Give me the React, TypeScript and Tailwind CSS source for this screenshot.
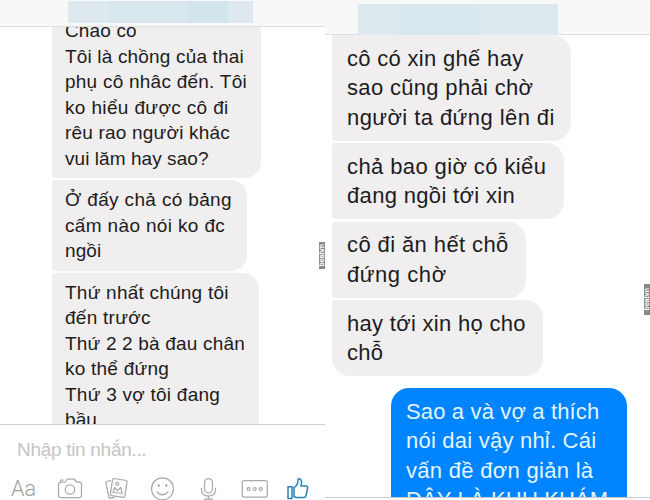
import clsx from 'clsx';

type Line = { text: string; tracking: string };

function Bubble({ lines, className, lineClass }: { lines: Line[]; className: string; lineClass: string }) {
  return (
    <div className={clsx('shrink-0', className)}>
      {lines.map((line) => (
        <div key={line.text} className={clsx('whitespace-nowrap', lineClass, line.tracking)}>
          {line.text}
        </div>
      ))}
    </div>
  );
}

const small = 'h-[25.5px] text-[19px] leading-[25.5px]';
const large = 'h-[29.5px] text-[22px] leading-[29.5px]';
const grey = 'bg-[#f0eeef] text-[#1d1c1d]';

function Watermark() {
  return (
    <div className="flex h-full w-full items-center justify-center border border-[#888] bg-[#8a8a8a]">
      <span className="rotate-180 text-[7px] font-bold leading-[4px] text-white [writing-mode:vertical-rl]">beatvn</span>
    </div>
  );
}

function Toolbar() {
  return (
    <div className="mt-[12px] flex h-[27px] pl-[11px]">
      <span className="w-[46px] pt-[2px] font-[Roboto] text-[21.500px] font-light leading-[25px] text-[#a0a0a0]">Aa</span>
      <svg className="h-[27px] w-[260px]" viewBox="57 474 260 27" fill="none" stroke="#aaa" strokeWidth="1.25" strokeLinecap="round" strokeLinejoin="round">
        <path d="M61 482h4l2.200-3h7l2.300 3h2.500q2.500 0 2.500 2.500v10.500q0 2.500-2.500 2.500H61q-2.500 0-2.500-2.500v-10.500q0-2.500 2.500-2.500z" />
        <circle cx="70" cy="489.500" r="4.700" />
        <path d="M60.500 481v-1h2.500" />
        <path d="M113.800 478.500l12.300 2q1.200.2 1 1.400l-2.300 14.500q-.2 1.200-1.400 1l-12-1.800q-1.200-.2-1-1.400l2.100-14.500q.2-1.200 1.300-1.200z" />
        <path d="M110.500 480.700l-3.800.8q-1 .2-.8 1.200l3 14.500q.2 1.100 1.300.9l4.300-.8M113 492.500l1.500-5 2.800 3 3.400-3 1.500 6z" />
        <circle cx="117.200" cy="483.800" r="1.500" />
        <circle cx="162.500" cy="488.800" r="11" />
        <path d="M157 492q5.500 5.500 11 0" />
        <path d="M158.800 485v1M166.300 485v1" strokeWidth="2" />
        <rect x="204.500" y="478.500" width="8" height="14.500" rx="4" />
        <path d="M201.500 488v1.500q0 6.500 7 6.500t7-6.500V488M208.500 496v3M204.500 499h8" />
        <rect x="242.300" y="480.700" width="25" height="16.300" rx="2" />
        <circle cx="248.700" cy="489" r="1.500" />
        <circle cx="254.700" cy="489" r="1.500" />
        <circle cx="260.700" cy="489" r="1.500" />
        <path stroke="#2b83b8" strokeWidth="1.500" d="M288 486.700h4v11.800h-4zM294 487.500q4-2 4-7.500 0-1.500 1.500-1.300 2 .3 2 3.300 0 2-.7 4h5.500q1.700.2 1.300 2l-1.700 8q-.3 1.500-2 1.500H296l-2-1z" />
      </svg>
    </div>
  );
}

function LeftPhone() {
  return (
    <section className="relative flex h-[500px] w-[325px] flex-col bg-white">
      <header className="h-[27px] shrink-0 border-b border-[#dedede] bg-[#f8f8f8] pl-[68px] pt-px">
        <div className="flex h-[22px] w-[185px] bg-[#dde9ee]">
          <div className="ml-[40px] w-[80px] bg-[#d9e8ee]" />
          <div className="w-[40px] bg-[#d2e5ec]" />
        </div>
      </header>
      <main className="flex h-[397px] shrink-0 flex-col items-start gap-[2px] overflow-hidden pl-[52px]">
        <Bubble
          className={clsx(grey, '-mt-[16px] w-[209px] rounded-r-[16px] rounded-l-[3px] py-[7px] pl-[13px]')}
          lineClass={small}
          lines={[
            { text: 'Chào cô', tracking: 'tracking-[0.15px]' },
            { text: 'Tôi là chồng của thai', tracking: 'tracking-[0.17px]' },
            { text: 'phụ cô nhâc đến. Tôi', tracking: 'tracking-[0.24px]' },
            { text: 'ko hiểu được cô đi', tracking: 'tracking-[0.36px]' },
            { text: 'rêu rao người khác', tracking: 'tracking-[0.2px]' },
            { text: 'vui lăm hay sao?', tracking: 'tracking-[0.06px]' },
          ]}
        />
        <Bubble
          className={clsx(grey, 'w-[195px] rounded-r-[16px] rounded-l-[3px] py-[7px] pl-[13px]')}
          lineClass={small}
          lines={[
            { text: 'Ở đấy chả có bảng', tracking: 'tracking-[0.35px]' },
            { text: 'cấm nào nói ko đc', tracking: 'tracking-[0.35px]' },
            { text: 'ngồi', tracking: 'tracking-[0.12px]' },
          ]}
        />
        <Bubble
          className={clsx(grey, 'w-[207px] rounded-tl-[3px] rounded-tr-[16px] py-[7px] pl-[13px]')}
          lineClass={small}
          lines={[
            { text: 'Thứ nhất chúng tôi', tracking: 'tracking-[0.23px]' },
            { text: 'đến trước', tracking: 'tracking-[0.27px]' },
            { text: 'Thứ 2 2 bà đau chân', tracking: 'tracking-[0.18px]' },
            { text: 'ko thể đứng', tracking: 'tracking-[0.23px]' },
            { text: 'Thứ 3 vợ tôi đang', tracking: 'tracking-[0.25px]' },
            { text: 'bầu', tracking: 'tracking-[0.1px]' },
          ]}
        />
      </main>
      <footer className="h-[76px] shrink-0 overflow-hidden border-t border-[#cfcfcf] bg-white">
        <div className="mt-[13px] pl-[17px] text-[19px] leading-[24px] tracking-[-0.3px] text-[#c4c4c4]">Nhập tin nhắn...</div>
        <Toolbar />
      </footer>
      <div className="absolute left-[319px] top-[242px] h-[27px] w-[6px]">
        <Watermark />
      </div>
    </section>
  );
}

function RightPhone() {
  return (
    <section className="relative flex h-[500px] w-[325px] flex-col bg-white">
      <header className="flex h-[35px] shrink-0 border-b border-[#dcdcdc] bg-[#f8f8f8] pl-[33px] pt-[4px]">
        <div className="flex h-[31px] w-[200px] bg-[#dce9ee]">
          <div className="ml-[40px] w-[80px] bg-[#d9e8ee]" />
        </div>
      </header>
      <main className="flex h-[462px] shrink-0 flex-col items-start gap-[2.500px] overflow-hidden pl-[7px]">
        <Bubble
          className={clsx(grey, 'w-[239px] rounded-r-[18px] rounded-l-[3px] py-[8.500px] pl-[15px]')}
          lineClass={large}
          lines={[
            { text: 'cô có xin ghế hay', tracking: 'tracking-[0.31px]' },
            { text: 'sao cũng phải chờ', tracking: 'tracking-[0.33px]' },
            { text: 'người ta đứng lên đi', tracking: 'tracking-[0.43px]' },
          ]}
        />
        <Bubble
          className={clsx(grey, 'w-[232px] rounded-r-[18px] rounded-l-[3px] py-[8.500px] pl-[15px]')}
          lineClass={large}
          lines={[
            { text: 'chả bao giờ có kiểu', tracking: 'tracking-[0.4px]' },
            { text: 'đang ngồi tới xin', tracking: 'tracking-[0.33px]' },
          ]}
        />
        <Bubble
          className={clsx(grey, 'w-[194px] rounded-r-[18px] rounded-l-[3px] py-[8.500px] pl-[15px]')}
          lineClass={large}
          lines={[
            { text: 'cô đi ăn hết chỗ', tracking: 'tracking-[0.4px]' },
            { text: 'đứng chờ', tracking: 'tracking-[0.55px]' },
          ]}
        />
        <Bubble
          className={clsx(grey, 'w-[211px] rounded-r-[18px] rounded-bl-[18px] rounded-tl-[3px] py-[8.500px] pl-[15px]')}
          lineClass={large}
          lines={[
            { text: 'hay tới xin họ cho', tracking: 'tracking-[0.3px]' },
            { text: 'chỗ', tracking: 'tracking-[0.3px]' },
          ]}
        />
        <Bubble
          className="ml-[59px] mt-[9.500px] w-[235.500px] rounded-t-[18px] bg-[#0084ff] py-[8.500px] pl-[15px] text-[#e4f5ff]"
          lineClass={large}
          lines={[
            { text: 'Sao a và vợ a thích', tracking: 'tracking-[0.15px]' },
            { text: 'nói dai vậy nhỉ. Cái', tracking: 'tracking-[0.22px]' },
            { text: 'vấn đề đơn giản là', tracking: 'tracking-[0.3px]' },
            { text: 'ĐÂY LÀ KHU KHÁM', tracking: 'tracking-[0.15px]' },
          ]}
        />
      </main>
      <div className="h-[3px] border-t border-[#c8ccd0] bg-white" />
      <div className="absolute left-[319px] top-[284px] h-[31px] w-[6px]">
        <Watermark />
      </div>
    </section>
  );
}

export default function App() {
  return (
    <div className="flex h-[500px] w-[650px] overflow-hidden bg-white font-['Liberation_Sans',Arial,sans-serif]">
      <LeftPhone />
      <RightPhone />
    </div>
  );
}
